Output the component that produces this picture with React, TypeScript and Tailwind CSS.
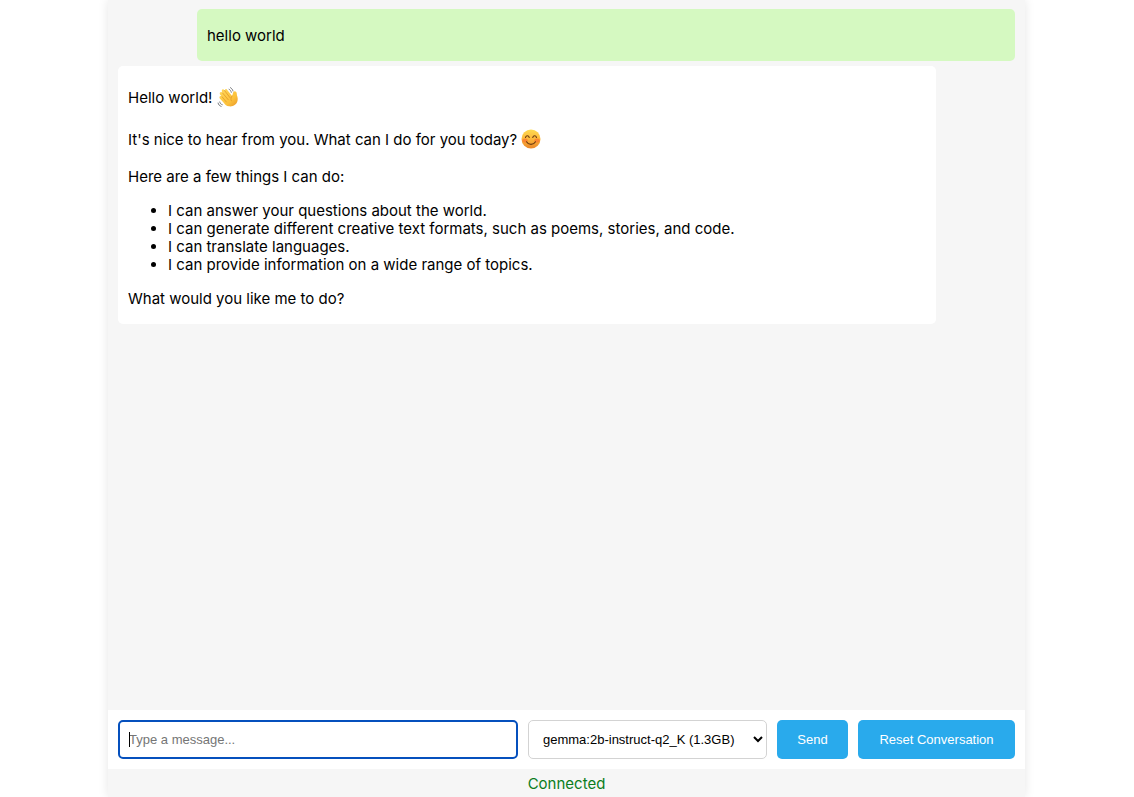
import React, { useState } from "react";

function WaveEmoji() {
  return (
    <svg role="img" aria-label="waving hand" viewBox="0 0 40 40" className="inline-block size-[22px] align-[-5px]">
      <defs>
        <linearGradient id="hand" x1="0" y1="0" x2="1" y2="1">
          <stop offset="0" stopColor="#ffd95c" />
          <stop offset="0.65" stopColor="#fcc13a" />
          <stop offset="1" stopColor="#e8962a" />
        </linearGradient>
      </defs>
      <path
        d="M22 37C17 36.500 14 33 11 29L5 22.500C3 19 6.500 16.500 9 19.500L5.500 15.500C3.500 11.500 7.500 9.500 10 12.500L9 10.500C7.500 6 11.500 4.500 13.500 8L14.500 9.500C13.500 5.500 17 4 19 7.500L27.500 18C28.500 16 28.500 13 30 10.500C32 8 36.500 10 36 14.500C36 18 38.500 21 37.500 26C36 34 29 38 22 37Z"
        fill="url(#hand)"
      />
      <path d="M9 19.500L17 29M10 12.500L20.500 25M13.500 8L23.500 21M27.500 18C25.500 20 24.500 23.500 26 27" fill="none" stroke="#dc8c24" strokeWidth="1.200" strokeLinecap="round" />
      <path d="M22 6C24 7 25.500 9 26 11.500M24.500 3C27 4.500 28.500 6.500 29 9M5 29C5.500 31.500 7 33.500 9.500 34M2 31C2.500 34 4.500 36 7.500 37" fill="none" stroke="#77797c" strokeWidth="1.800" strokeLinecap="round" />
    </svg>
  );
}

function SmileEmoji() {
  return (
    <svg role="img" aria-label="smiling face" viewBox="0 0 40 40" className="inline-block size-5 align-[-4px]">
      <defs>
        <linearGradient id="face" x1="0" y1="0" x2="0" y2="1">
          <stop offset="0" stopColor="#fedb50" />
          <stop offset="0.5" stopColor="#fcb83c" />
          <stop offset="1" stopColor="#ea8528" />
        </linearGradient>
      </defs>
      <circle cx="20" cy="20" r="19" fill="url(#face)" />
      <ellipse cx="8" cy="23" rx="5.500" ry="4" fill="#f9702f" opacity="0.65" />
      <ellipse cx="32" cy="23" rx="5.500" ry="4" fill="#f9702f" opacity="0.65" />
      <path d="M9 17C10.500 12.500 15 12.500 16.500 17M23.500 17C25 12.500 29.500 12.500 31 17M11 25.500C15 32.500 25 32.500 29 25.500" fill="none" stroke="#6b3a10" strokeWidth="2.200" strokeLinecap="round" />
    </svg>
  );
}

export default function App() {
  const [message, setMessage] = useState("");

  return (
    <div className="min-h-screen bg-white pr-px font-['Inter',sans-serif] text-[15px] leading-[18px] text-black">
      <div className="mx-auto flex min-h-screen w-full max-w-[917px] flex-col bg-[#f6f6f6] shadow-[0_0_10px_rgba(0,0,0,0.1)]">
        <main className="flex flex-1 flex-col gap-[5px] px-2.5 pt-[9px]">
          <article className="ml-[79px] rounded-[5px] bg-[#d5f9c1] px-2.5 pt-[18px] pb-4">
            <p>hello world</p>
          </article>
          <article className="mr-[79px] flex flex-col gap-4 rounded-[5px] bg-white px-2.5 pt-[18px] pb-4">
            <p className="pt-0.5 leading-6">
              Hello world! <WaveEmoji />
            </p>
            <p className="pt-0.5 leading-6">
              It's nice to hear from you. What can I do for you today? <SmileEmoji />
            </p>
            <p>Here are a few things I can do:</p>
            <ul className="list-disc pl-10">
              <li>I can answer your questions about the world.</li>
              <li>I can generate different creative text formats, such as poems, stories, and code.</li>
              <li>I can translate languages.</li>
              <li>I can provide information on a wide range of topics.</li>
            </ul>
            <p>What would you like me to do?</p>
          </article>
        </main>
        <form
          onSubmit={(e) => e.preventDefault()}
          className="flex gap-2.5 bg-white p-2.5 font-['Liberation_Sans',sans-serif] text-[13px] leading-[15px]"
        >
          <div className="relative flex min-w-0 flex-1">
            <input
              type="text"
              aria-label="Message"
              placeholder="Type a message..."
              value={message}
              onChange={(e) => setMessage(e.target.value)}
              className="peer h-[39px] w-full rounded-[5px] border-2 border-[#0550bd] px-[9px] outline-none placeholder:text-[#757575]"
            />
            <span className="absolute top-3 left-[11px] h-[15px] w-px bg-black peer-focus:hidden" />
          </div>
          <select aria-label="Model" className="h-[39px] w-[239px] rounded-[5px] border border-[#d3d3d3] bg-white px-2.5">
            <option>gemma:2b-instruct-q2_K (1.3GB)</option>
          </select>
          <button type="submit" className="h-[39px] min-w-[71px] rounded-[5px] bg-[#29aaec] px-5 text-white">
            Send
          </button>
          <button type="button" className="h-[39px] min-w-[157px] rounded-[5px] bg-[#29aaec] px-5 text-white">
            Reset Conversation
          </button>
        </form>
        <footer className="pt-1.5 pb-1 text-center text-[#0b7d1c]">Connected</footer>
      </div>
    </div>
  );
}
